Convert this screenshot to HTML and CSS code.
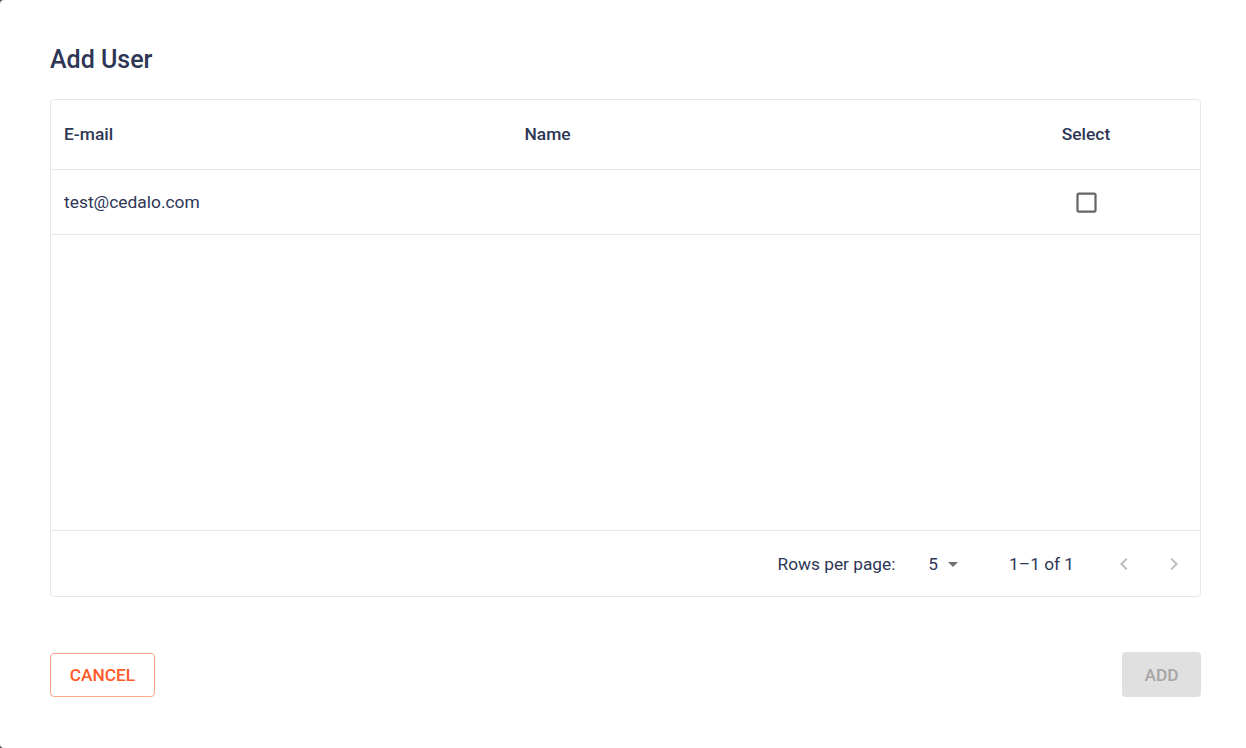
FILE: index.html
```html
<!DOCTYPE html>
<html lang="en">
<head>
    <meta charset="UTF-8">
    <meta name="viewport" content="width=device-width, initial-scale=1.0">
    <title>Add User</title>
    <link rel="stylesheet" href="styles.css">
</head>
<body>
    <div class="dialog">
        <h2 class="dialog-title">Add User</h2>

        <div class="table-box">
            <div class="row head">
                <div class="cell">E-mail</div>
                <div class="cell">Name</div>
                <div class="cell center">Select</div>
            </div>
            <div class="row">
                <div class="cell">test@cedalo.com</div>
                <div class="cell"></div>
                <div class="cell center">
                    <!-- checkbox -->
                    <svg class="checkbox" viewBox="0 0 24 24"><path d="M19 5v14H5V5h14m0-2H5c-1.11 0-2 .9-2 2v14c0 1.1.89 2 2 2h14c1.11 0 2-.9 2-2V5c0-1.1-.89-2-2-2z"/></svg>
                </div>
            </div>
            <div class="table-empty"></div>
            <div class="pagination">
                <span class="rows-label">Rows per page:</span>
                <span class="rows-select">5
                    <svg class="select-arrow" viewBox="0 0 24 24"><path d="M7 10l5 5 5-5z"/></svg>
                </span>
                <span class="rows-shown">1–1 of 1</span>
                <span class="page-btn">
                    <svg viewBox="0 0 24 24"><path d="M15.41 16.59L10.83 12l4.58-4.59L14 6l-6 6 6 6 1.41-1.41z"/></svg>
                </span>
                <span class="page-btn">
                    <svg viewBox="0 0 24 24"><path d="M8.59 16.59L13.17 12 8.59 7.41 10 6l6 6-6 6-1.41-1.41z"/></svg>
                </span>
            </div>
        </div>

        <div class="actions">
            <button class="btn btn-cancel">Cancel</button>
            <button class="btn btn-add" disabled>Add</button>
        </div>
    </div>
</body>
</html>
```

FILE: styles.css
```css
html, body {
    margin: 0;
    height: 100%;
}

body {
    background: #4a4a4a;
    font-family: Roboto, "Liberation Sans", sans-serif;
    color: #2d3654;
}

.dialog {
    background: #fff;
    height: 100%;
    box-sizing: border-box;
    border-radius: 4px 0 0 4px;
    padding: 44px 45px 0 50px;
}

.dialog-title {
    margin: 0 0 23px;
    font-size: 25px;
    line-height: 32px;
    font-weight: 500;
}

.table-box {
    box-sizing: border-box;
    border: 1px solid #e6e7ec;
    border-radius: 4px;
    height: 498px;
    display: flex;
    flex-direction: column;
}

.row {
    display: grid;
    grid-template-columns: 1fr 1fr 228px;
    height: 64px;
    border-bottom: 1px solid #e6e7ec;
    font-size: 17.4px;
}

.row.head {
    height: 69px;
    font-weight: 500;
}

.row.head .cell {
    padding-bottom: 2px;
}

.cell {
    display: flex;
    align-items: center;
    padding: 0 13px;
}

.cell.center {
    justify-content: center;
}

.checkbox {
    width: 27px;
    height: 27px;
    fill: #666;
}

.table-empty {
    flex: 1;
    border-bottom: 1px solid #e6e7ec;
}

.pagination {
    height: 65px;
    display: flex;
    align-items: center;
    justify-content: flex-end;
    padding-right: 2px;
    font-size: 17.3px;
}

.rows-select {
    display: flex;
    align-items: center;
    margin-left: 33px;
}

.select-arrow {
    width: 24px;
    height: 24px;
    fill: #6f6f6f;
    margin-left: 3px;
}

.rows-shown {
    margin-left: 44px;
    margin-right: 26px;
}

.page-btn {
    width: 48px;
    height: 48px;
    display: flex;
    align-items: center;
    justify-content: center;
}

.page-btn + .page-btn {
    margin-left: 2px;
}

.page-btn svg {
    width: 24px;
    height: 24px;
    fill: #bdbdbd;
}

.actions {
    display: flex;
    justify-content: space-between;
    align-items: center;
    margin-top: 55px;
}

.btn {
    font-family: Roboto, "Liberation Sans", sans-serif;
    font-size: 17.3px;
    font-weight: 500;
    text-transform: uppercase;
    border-radius: 4px;
    height: 45px;
}

.btn-cancel {
    width: 105px;
    height: 44px;
    background: #fff;
    color: #ff5a28;
    border: 1px solid #ffa486;
}

.btn-add {
    width: 79px;
    background: #e0e0e0;
    color: #a6a6a6;
    border: none;
}
```
